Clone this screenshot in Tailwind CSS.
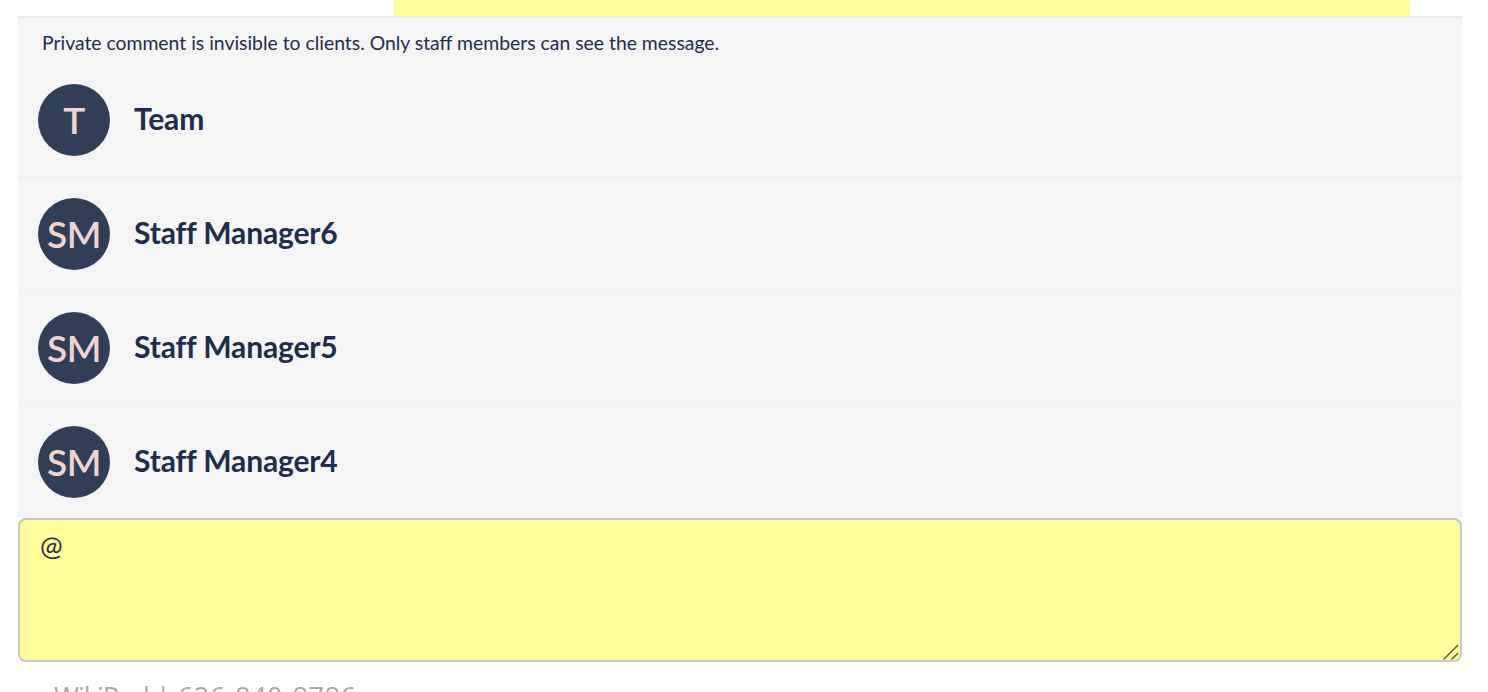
<!DOCTYPE html>
<html lang="en">

<head>
    <meta charset="UTF-8">
    <meta name="viewport" content="width=device-width, initial-scale=1.0">
    <script src="https://cdn.jsdelivr.net/npm/@tailwindcss/browser@4"></script>
    <title>comment</title>
</head>

<body class="bg-white font-['Lato',sans-serif] text-[#1f2d4d]">
    <div class="h-[692px] overflow-hidden">
        <div class="h-4 pl-[394px] pr-[78px]">
            <div class="h-4 bg-[#fffc9b]"></div>
        </div>

        <div class="ml-[18px] w-[1444px]">
            <div class="bg-[#f5f5f5] border-t-2 border-[#e8e8e8]">
                <p class="h-[46px] pl-6 pt-[14px] text-[19.36px] leading-[22px] border-b border-[#f1f1f1]">Private comment is invisible to clients. Only staff members can see the message.</p>

                <div class="h-[114px] pl-5 flex items-center gap-6 border-b-2 border-[#f1f1f1]">
                    <div class="w-[72px] h-[72px] rounded-full bg-[#313e58] text-[#f0d4cf] text-[37px] font-semibold tracking-[-0.5px] flex items-center justify-center">T</div>
                    <span class="text-[30px] font-bold tracking-[-0.15px] -mt-1">Team</span>
                </div>
                <div class="h-[114px] pl-5 flex items-center gap-6 border-b-2 border-[#f1f1f1]">
                    <div class="w-[72px] h-[72px] rounded-full bg-[#313e58] text-[#f0d4cf] text-[37px] font-semibold tracking-[-0.5px] flex items-center justify-center">SM</div>
                    <span class="text-[30px] font-bold tracking-[-0.15px] -mt-1">Staff Manager6</span>
                </div>
                <div class="h-[114px] pl-5 flex items-center gap-6 border-b-2 border-[#f1f1f1]">
                    <div class="w-[72px] h-[72px] rounded-full bg-[#313e58] text-[#f0d4cf] text-[37px] font-semibold tracking-[-0.5px] flex items-center justify-center">SM</div>
                    <span class="text-[30px] font-bold tracking-[-0.15px] -mt-1">Staff Manager5</span>
                </div>
                <div class="h-[112px] pl-5 flex items-center gap-6">
                    <div class="w-[72px] h-[72px] rounded-full bg-[#313e58] text-[#f0d4cf] text-[37px] font-semibold tracking-[-0.5px] flex items-center justify-center">SM</div>
                    <span class="text-[30px] font-bold tracking-[-0.15px] -mt-1">Staff Manager4</span>
                </div>
            </div>

            <div class="relative">
                <textarea class="block w-full h-[144px] bg-[#fffc9b] border-2 border-[#c8c8c8] rounded-lg px-5 py-[10px] text-[27px] leading-[32px] outline-none resize-none">@</textarea>
                <svg class="absolute right-[3px] bottom-[2px] w-4 h-4" viewBox="0 0 16 16" fill="none" stroke="#555" stroke-width="1.5">
                    <path d="M0.5 15.5L15 1" />
                    <path d="M8.5 15.5L15 9" />
                </svg>
            </div>
        </div>

        <p class="pl-[54px] pt-[19px] text-[27px] leading-[32px] font-['Open_Sans',sans-serif] text-[#a8a8a8]"><span class="tracking-[-1px]">WikiPod</span> | <span class="tracking-[0.6px]">626-840-8786</span></p>
    </div>
</body>

</html>
